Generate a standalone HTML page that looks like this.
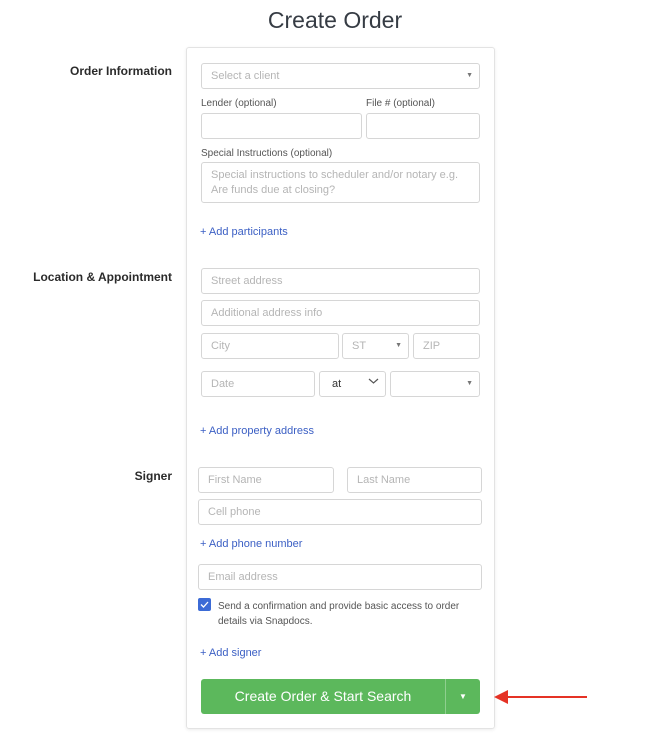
<!DOCTYPE html>
<html><head><meta charset="utf-8"><style>
body{margin:0;width:670px;height:742px;background:#fff;font-family:"Liberation Sans",sans-serif;position:relative;overflow:hidden}
.a{position:absolute}
h1{position:absolute;left:0;width:670px;top:7px;margin:0;text-align:center;font-weight:normal;font-size:23px;color:#363c44}
.lbl{position:absolute;right:498px;font-size:12px;font-weight:bold;color:#2b2b2b;white-space:nowrap}
.card{position:absolute;left:186px;top:47px;width:307px;height:680px;border:1px solid #e3e3e3;border-radius:3px;box-shadow:0 1px 3px rgba(0,0,0,.08)}
.in{position:absolute;box-sizing:border-box;border:1px solid #d6d6d6;border-radius:3px;height:26px;font-size:11px;color:#b5b5b5;padding:6px 9px;background:#fff}
.sm{position:absolute;font-size:10px;color:#555}
.lnk{position:absolute;font-size:11px;color:#3b5fc4}
.car{position:absolute;right:6px;top:8px;font-size:7px;color:#777}
</style></head><body>
<h1>Create Order</h1>
<div class="lbl" style="top:64px">Order Information</div>
<div class="lbl" style="top:270px">Location &amp; Appointment</div>
<div class="lbl" style="top:469px">Signer</div>
<div class="card"></div>
<div class="in" style="left:201px;top:63px;width:279px">Select a client<span class="car">▼</span></div>
<div class="sm" style="left:201px;top:98px">Lender (optional)</div>
<div class="sm" style="left:366px;top:98px">File # (optional)</div>
<div class="in" style="left:201px;top:113px;width:161px"></div>
<div class="in" style="left:366px;top:113px;width:114px"></div>
<div class="sm" style="left:201px;top:148px">Special Instructions (optional)</div>
<div class="in" style="left:201px;top:162px;width:279px;height:41px;line-height:15px;padding-top:5px">Special instructions to scheduler and/or notary e.g.<br>Are funds due at closing?</div>
<div class="lnk" style="left:200px;top:226px">+ Add participants</div>
<div class="in" style="left:201px;top:268px;width:279px">Street address</div>
<div class="in" style="left:201px;top:300px;width:279px">Additional address info</div>
<div class="in" style="left:201px;top:333px;width:138px">City</div>
<div class="in" style="left:342px;top:333px;width:67px">ST<span class="car">▼</span></div>
<div class="in" style="left:413px;top:333px;width:67px">ZIP</div>
<div class="in" style="left:201px;top:371px;width:114px">Date</div>
<div class="in" style="left:319px;top:371px;width:67px;color:#333;padding-left:12px">at<span style="position:absolute;right:6px;top:4px"><svg width="11" height="8"><path d="M1 2l4.5 4 4.5-4" fill="none" stroke="#555" stroke-width="1.2"/></svg></span></div>
<div class="in" style="left:390px;top:371px;width:90px"><span class="car">▼</span></div>
<div class="lnk" style="left:200px;top:425px">+ Add property address</div>
<div class="in" style="left:198px;top:467px;width:136px">First Name</div>
<div class="in" style="left:347px;top:467px;width:135px">Last Name</div>
<div class="in" style="left:198px;top:499px;width:284px">Cell phone</div>
<div class="lnk" style="left:200px;top:538px">+ Add phone number</div>
<div class="in" style="left:198px;top:564px;width:284px">Email address</div>
<div class="a" style="left:198px;top:598px;width:13px;height:13px;background:#3c6bd6;border-radius:2px"><svg width="13" height="13"><path d="M3 6.5l2.5 2.5 4.5-5" fill="none" stroke="#fff" stroke-width="1.3"/></svg></div>
<div class="sm" style="left:218px;top:599px;line-height:15px;color:#555">Send a confirmation and provide basic access to order<br>details via Snapdocs.</div>
<div class="lnk" style="left:200px;top:647px">+ Add signer</div>
<div class="a" style="left:201px;top:679px;width:279px;height:35px;background:#5cb85c;border-radius:3px"></div>
<div class="a" style="left:201px;top:679px;width:244px;height:35px;line-height:35px;text-align:center;color:#fff;font-size:14px">Create Order &amp; Start Search</div>
<div class="a" style="left:445px;top:679px;width:1px;height:35px;background:#8fcf8f"></div>
<div class="a" style="left:459px;top:692px;color:#fff;font-size:8px">▼</div>
<svg class="a" style="left:492px;top:689px" width="100" height="16"><path d="M12 8H95" stroke="#e53225" stroke-width="2"/><path d="M2 8l14-7v14z" fill="#e53225"/></svg>
</body></html>
